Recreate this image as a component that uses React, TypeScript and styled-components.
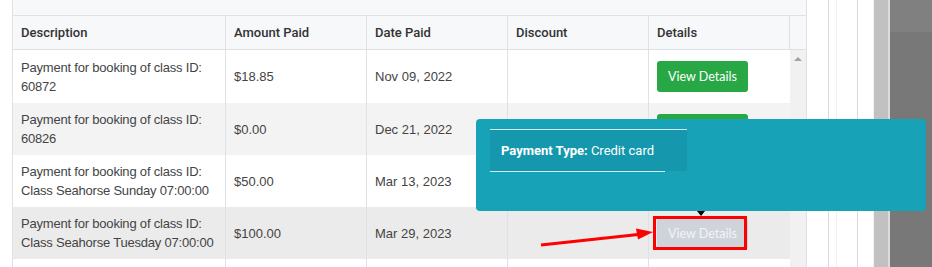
import React from 'react';
import styled, { createGlobalStyle } from 'styled-components';

const Global = createGlobalStyle`
  html, body { margin: 0; padding: 0; background: #fff; }
  body {
    width: 932px; height: 267px; overflow: hidden;
    font-family: "Liberation Sans", Arial, sans-serif;
  }
  * { box-sizing: border-box; }
`;

const LINE = '#e0e1e6';

const Page = styled.div`
  position: relative;
  width: 932px;
  height: 267px;
  overflow: hidden;
  display: flex;
  background: #fff;
`;

const LeftGap = styled.div`
  width: 12px;
  flex: none;
`;

const Panel = styled.div`
  width: 795px;
  flex: none;
  border-left: 1px solid ${LINE};
  border-right: 1px solid ${LINE};
  display: flex;
  flex-direction: column;
`;

const TopBand = styled.div`
  height: 16px;
  flex: none;
  background: #f7f8fa;
  border-bottom: 1px solid ${LINE};
`;

const HeaderRow = styled.div`
  height: 34px;
  flex: none;
  display: grid;
  grid-template-columns: 213px 141px 141px 141px 141px 16px;
  background: #f7f8fa;
  border-bottom: 1px solid ${LINE};
`;

const HeadCell = styled.div`
  display: flex;
  align-items: center;
  padding: 0 8px;
  border-right: 1px solid ${LINE};
  font-family: Roboto, "Liberation Sans", sans-serif;
  font-weight: 500;
  font-size: 13px;
  color: #333;
  &:last-child { border-right: none; }
`;

const Body = styled.div`
  flex: 1;
  display: flex;
  min-height: 0;
`;

const Rows = styled.div`
  width: 777px;
  flex: none;
  display: flex;
  flex-direction: column;
`;

const Row = styled.div<{ $h: number; $bg: string }>`
  height: ${(p) => p.$h}px;
  flex: none;
  display: grid;
  grid-template-columns: 213px 141px 141px 141px 141px;
  background: ${(p) => p.$bg};
`;

const Cell = styled.div`
  display: flex;
  align-items: center;
  padding: 0 8px;
  border-right: 1px solid ${LINE};
  font-size: 13px;
  line-height: 19px;
  color: #444;
  white-space: nowrap;
  &:last-child { border-right: none; }
`;

const DescText = styled.div`
  letter-spacing: -0.2px;
`;

const Button = styled.button<{ $disabled?: boolean }>`
  width: 91px;
  height: 31px;
  border: none;
  border-radius: 3px;
  background: ${(p) => (p.$disabled ? '#cfd3da' : '#28a745')};
  color: ${(p) => (p.$disabled ? '#f3f4f7' : '#fff')};
  font-family: Lato, "Open Sans", sans-serif;
  font-size: 12.5px;
  padding: 0;
  cursor: pointer;
`;

const ScrollTrack = styled.div`
  width: 16px;
  flex: none;
  background: #f1f1f1;
  display: flex;
  justify-content: center;
  padding-top: 7px;
`;

const UpArrow = styled.div`
  width: 0;
  height: 0;
  border-left: 4px solid transparent;
  border-right: 4px solid transparent;
  border-bottom: 4px solid #a3a3a3;
`;

const RightStrip = styled.div`
  flex: 1;
  display: flex;
`;

const Stripe = styled.div<{ $w: number; $bg: string }>`
  width: ${(p) => p.$w}px;
  flex: none;
  background: ${(p) => p.$bg};
`;

const DarkStripe = styled.div`
  flex: 1;
  display: flex;
  flex-direction: column;
  background: #787878;
`;

const DarkTop = styled.div`
  height: 32px;
  background: #808080;
`;

const Popover = styled.div`
  position: absolute;
  left: 476px;
  top: 119px;
  width: 450px;
  height: 92px;
  background: #17a2b8;
  border-radius: 4px;
  padding: 10px 0 0 14px;
  display: flex;
  flex-direction: column;
  z-index: 5;
`;

const InfoBlock = styled.div`
  width: 197px;
  height: 42px;
  border-top: 1px solid #d3eef2;
  background: #1598ad;
  display: flex;
  align-items: center;
  padding-left: 11px;
  font-family: Roboto, "Liberation Sans", sans-serif;
  font-size: 13px;
  color: #fff;
  white-space: nowrap;
  b { font-weight: 700; }
`;

const InfoRule = styled.div`
  width: 175px;
  height: 1px;
  background: #d3eef2;
`;

const PopArrow = styled.div`
  position: absolute;
  left: 697px;
  top: 211px;
  width: 0;
  height: 0;
  border-left: 4px solid transparent;
  border-right: 4px solid transparent;
  border-top: 5px solid #000;
  z-index: 5;
`;

const Highlight = styled.div`
  position: absolute;
  left: 653px;
  top: 216px;
  width: 94px;
  height: 34px;
  border: 3px solid #ff0000;
  z-index: 6;
`;

const ArrowSvg = styled.svg`
  position: absolute;
  left: 530px;
  top: 220px;
  z-index: 6;
`;

type Item = {
  desc: [string, string];
  amount: string;
  date: string;
  h: number;
  bg: string;
  disabled?: boolean;
};

const items: Item[] = [
  { desc: ['Payment for booking of class ID:', '60872'], amount: '$18.85', date: 'Nov 09, 2022', h: 53, bg: '#fff' },
  { desc: ['Payment for booking of class ID:', '60826'], amount: '$0.00', date: 'Dec 21, 2022', h: 52, bg: '#f3f3f3' },
  { desc: ['Payment for booking of class ID:', 'Class Seahorse Sunday 07:00:00'], amount: '$50.00', date: 'Mar 13, 2023', h: 52, bg: '#fff' },
  { desc: ['Payment for booking of class ID:', 'Class Seahorse Tuesday 07:00:00'], amount: '$100.00', date: 'Mar 29, 2023', h: 52, bg: '#ebebeb', disabled: true },
];

export default function App() {
  return (
    <>
      <Global />
      <Page>
        <LeftGap />
        <Panel>
          <TopBand />
          <HeaderRow>
            <HeadCell>Description</HeadCell>
            <HeadCell>Amount Paid</HeadCell>
            <HeadCell>Date Paid</HeadCell>
            <HeadCell>Discount</HeadCell>
            <HeadCell>Details</HeadCell>
            <HeadCell />
          </HeaderRow>
          <Body>
            <Rows>
              {items.map((it, i) => (
                <Row key={i} $h={it.h} $bg={it.bg}>
                  <Cell>
                    <DescText>
                      {it.desc[0]}
                      <br />
                      {it.desc[1]}
                    </DescText>
                  </Cell>
                  <Cell>{it.amount}</Cell>
                  <Cell>{it.date}</Cell>
                  <Cell />
                  <Cell>
                    <Button $disabled={it.disabled}>View Details</Button>
                  </Cell>
                </Row>
              ))}
              <Row $h={20} $bg="#fff">
                <Cell />
                <Cell />
                <Cell />
                <Cell />
                <Cell />
              </Row>
            </Rows>
            <ScrollTrack>
              <UpArrow />
            </ScrollTrack>
          </Body>
        </Panel>
        <RightStrip>
          <Stripe $w={21} $bg="#fff" />
          <Stripe $w={1} $bg="#d9d9de" />
          <Stripe $w={7} $bg="#fff" />
          <Stripe $w={1} $bg="#f0f0f2" />
          <Stripe $w={20} $bg="#fff" />
          <Stripe $w={1} $bg="#d9d9de" />
          <Stripe $w={15} $bg="#fff" />
          <Stripe $w={1} $bg="#f1f1f1" />
          <Stripe $w={14} $bg="#c1c1c1" />
          <Stripe $w={2} $bg="#dcdcdc" />
          <DarkStripe>
            <DarkTop />
          </DarkStripe>
        </RightStrip>

        <Popover>
          <InfoBlock>
            <b>Payment Type:</b>&nbsp;Credit card
          </InfoBlock>
          <InfoRule />
        </Popover>
        <PopArrow />
        <Highlight />
        <ArrowSvg width="130" height="32" viewBox="0 0 130 32">
          <line x1="11" y1="25" x2="108" y2="14.5" stroke="#ff0000" strokeWidth="3" />
          <polygon points="123,12 106,8.5 108,19.5" fill="#ff0000" />
        </ArrowSvg>
      </Page>
    </>
  );
}
